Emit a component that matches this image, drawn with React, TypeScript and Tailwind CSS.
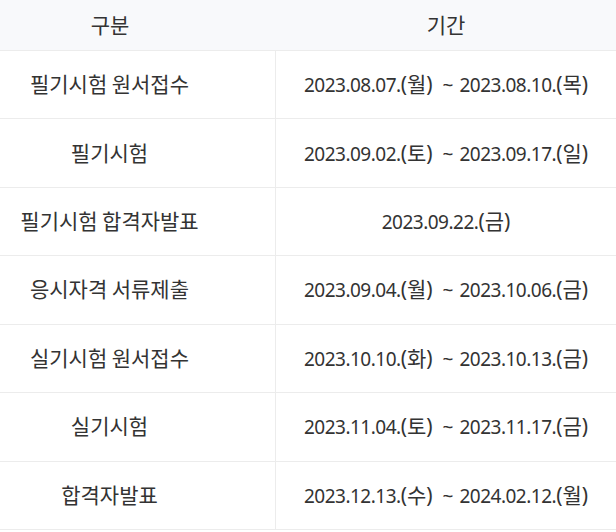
const rows = [
  { name: "필기시험 원서접수", period: "2023.08.07.(월) ~ 2023.08.10.(목)" },
  { name: "필기시험", period: "2023.09.02.(토) ~ 2023.09.17.(일)" },
  { name: "필기시험 합격자발표", period: "2023.09.22.(금)" },
  { name: "응시자격 서류제출", period: "2023.09.04.(월) ~ 2023.10.06.(금)" },
  { name: "실기시험 원서접수", period: "2023.10.10.(화) ~ 2023.10.13.(금)" },
  { name: "실기시험", period: "2023.11.04.(토) ~ 2023.11.17.(금)" },
  { name: "합격자발표", period: "2023.12.13.(수) ~ 2024.02.12.(월)" },
];

// hangul runs are set larger than the digits, like the original font does
function Txt({ text }: { text: string }) {
  const parts = text.split(/(\([가-힣]+\)|[가-힣]+| ~ )/).filter((p) => p !== "");
  return (
    <span>
      {parts.map((p, i) => {
        if (/[가-힣]/.test(p))
          return (
            <span key={i} className="text-[21px]">
              {p}
            </span>
          );
        if (p === " ~ ")
          return (
            <span key={i} className="ml-[10px] mr-[6px] text-[19px]">
              ~
            </span>
          );
        return (
          <span key={i} className="whitespace-pre text-[19px] tracking-[-0.5px]">
            {p}
          </span>
        );
      })}
    </span>
  );
}

export default function App() {
  return (
    <div
      className="w-[616px] bg-white leading-none text-[#333]"
      style={{ fontFamily: '"Noto Sans", "Noto Sans CJK KR", sans-serif' }}
    >
      <div className="flex h-[51px] items-center border-b border-[#ececec] bg-[#f8f9fb]">
        <div className="w-[276px] pr-[56px] text-center">
          <Txt text="구분" />
        </div>
        <div className="flex-1 text-center">
          <Txt text="기간" />
        </div>
      </div>
      {rows.map((r) => (
        <div key={r.name} className="flex h-[68.43px] border-b border-[#ececec]">
          <div className="flex w-[276px] items-center justify-center border-r border-[#ececec] pr-[56px]">
            <Txt text={r.name} />
          </div>
          <div className="flex flex-1 items-center justify-center">
            <Txt text={r.period} />
          </div>
        </div>
      ))}
    </div>
  );
}
